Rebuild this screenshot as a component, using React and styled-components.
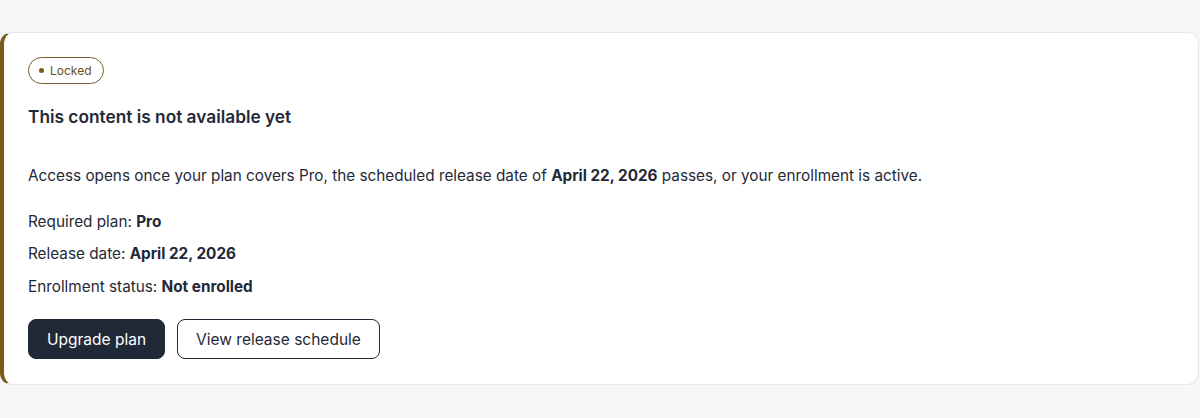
import styled, { createGlobalStyle } from 'styled-components';

const GlobalStyle = createGlobalStyle`
	* {
		box-sizing: border-box;
	}
	body {
		margin: 0;
		background: #f6f7f9;
		font-family: Inter, 'Liberation Sans', sans-serif;
		color: #1f2937;
	}
`;

const Page = styled.div`
	padding: 32px 1px 33px 0;
`;

const Card = styled.section`
	display: flex;
	flex-direction: column;
	align-items: flex-start;
	background: #fff;
	border: 1px solid #e5e7eb;
	border-left: 4px solid #7a5a16;
	border-radius: 12px;
	padding: 24px 24px 25px 24px;
`;

const Badge = styled.span`
	display: inline-flex;
	align-items: center;
	gap: 6px;
	height: 27px;
	padding: 0 11px 0 10px;
	border: 1px solid #7a5c2a;
	border-radius: 999px;
	font-size: 12px;
	color: #6b4f1d;
`;

const Dot = styled.span`
	width: 5px;
	height: 5px;
	border-radius: 50%;
	background: #7a5a16;
`;

const Title = styled.h2`
	margin: 20px 0 0;
	font-size: 17.3px;
	line-height: 25px;
	font-weight: 600;
	color: #1f2937;
`;

const Text = styled.p`
	margin: ${(p) => p.$top}px 0 0;
	font-size: 15.3px;
	line-height: 24px;
	color: #1f2937;

	strong {
		font-weight: 700;
	}
`;

const Actions = styled.div`
	display: flex;
	gap: 12px;
	margin-top: 20px;
`;

const Button = styled.button`
	height: 40px;
	padding: 0 18px;
	border-radius: 8px;
	font-family: inherit;
	font-size: 15.5px;
	cursor: pointer;
	border: 1px solid #1f2937;
	background: ${(p) => (p.$primary ? '#1f2937' : '#fff')};
	color: ${(p) => (p.$primary ? '#fff' : '#1f2937')};
`;

const App = () => {
	return (
		<Page>
			<GlobalStyle />
			<Card>
				<Badge>
					<Dot />
					Locked
				</Badge>
				<Title>This content is not available yet</Title>
				<Text $top={35}>
					Access opens once your plan covers Pro, the scheduled release date of{' '}
					<strong>April 22, 2026</strong> passes, or your enrollment is active.
				</Text>
				<Text $top={22}>
					Required plan: <strong>Pro</strong>
				</Text>
				<Text $top={8}>
					Release date: <strong>April 22, 2026</strong>
				</Text>
				<Text $top={9}>
					Enrollment status: <strong>Not enrolled</strong>
				</Text>
				<Actions>
					<Button $primary>Upgrade plan</Button>
					<Button>View release schedule</Button>
				</Actions>
			</Card>
		</Page>
	);
};

export default App;
